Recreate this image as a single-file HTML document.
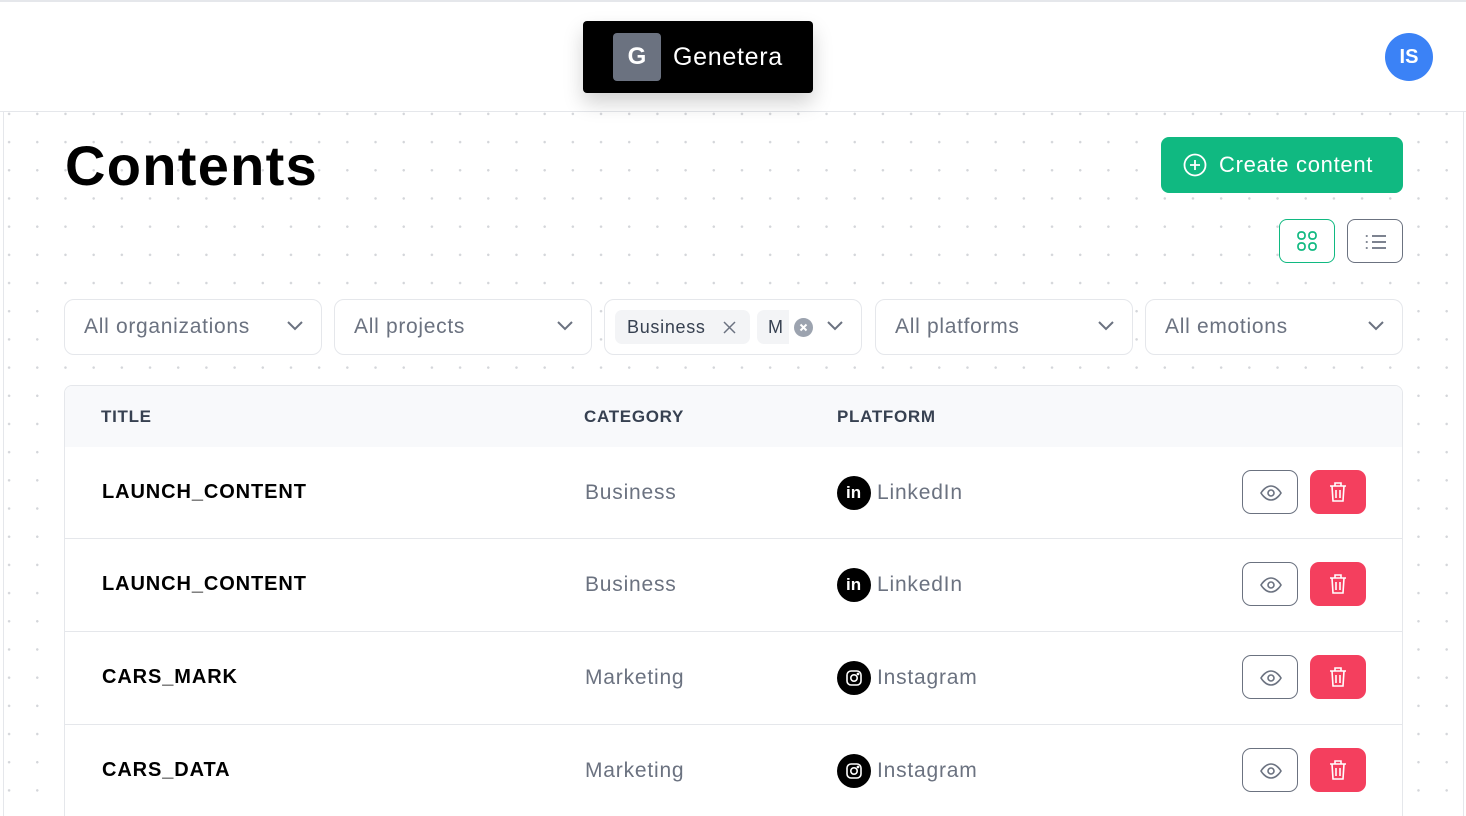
<!DOCTYPE html>
<html><head><meta charset="utf-8"><style>
*{box-sizing:border-box;margin:0;padding:0}
html,body{width:1466px;height:816px;overflow:hidden}
body{background:#fff;font-family:"Liberation Sans",sans-serif;position:relative;letter-spacing:.7px}
.top{position:absolute;left:0;top:0;width:1466px;height:112px;border-top:2px solid #e5e7eb;border-bottom:1px solid #e5e7eb;background:#fff}
.main{position:absolute;left:3px;top:112px;width:1461px;height:704px;border-left:1px solid #e5e7eb;border-right:1px solid #e5e7eb;
background-image:radial-gradient(circle,#d4d6da 1.1px,transparent 1.3px);background-size:28.2px 28.2px;background-position:-9px 16px}
.logo{position:absolute;left:583px;top:21px;width:230px;height:72px;background:#000;border-radius:4px;box-shadow:0 10px 20px rgba(0,0,0,.18);color:#fff}
.logo .g{position:absolute;left:30px;top:12px;width:48px;height:48px;background:#6b7280;border-radius:4px;font-weight:bold;font-size:24px;text-align:center;line-height:48px;letter-spacing:0}
.logo .t{position:absolute;left:90px;top:22px;font-size:25px}
.av{position:absolute;left:1385px;top:33px;width:48px;height:48px;border-radius:50%;background:#3b82f6;color:#fff;font-weight:bold;font-size:20px;text-align:center;line-height:48px;letter-spacing:0}
h1{position:absolute;left:65px;top:133px;font-size:56px;font-weight:bold;color:#000;letter-spacing:1.3px}
.create{position:absolute;left:1161px;top:137px;width:242px;height:56px;background:#10b981;border-radius:8px;color:#fff;font-size:22px;line-height:56px;padding-left:58px}
.create svg{position:absolute;left:22px;top:16px}
.vb{position:absolute;top:219px;width:56px;height:44px;border-radius:8px;background:#fff}
.sel{position:absolute;top:299px;width:258px;height:56px;border:1px solid #e5e7eb;border-radius:10px;background:#fff;font-size:21px;color:#6b7280;line-height:54px;padding-left:19px}
.sel .ch{position:absolute;right:17px;top:20px}
.tag{position:absolute;top:10px;height:34px;background:#f3f4f6;border-radius:7px;line-height:34px;font-size:18px;color:#374151}
.table{position:absolute;left:64px;top:385px;width:1339px;height:431px;border:1px solid #e5e7eb;border-bottom:none;border-radius:8px 8px 0 0;background:#fff;overflow:hidden}
.th{height:61px;background:#f8f9fb;position:relative;font-size:17px;font-weight:bold;color:#374151}
.th span,.row span{position:absolute}
.row{height:93px;border-top:1px solid #e5e7eb;position:relative}
.row .ti{left:37px;top:34px;font-size:20px;font-weight:bold;color:#000;letter-spacing:.9px}
.row .ca{left:520px;top:34px;font-size:21px;color:#6b7280;letter-spacing:.8px}
.row .pl{left:812px;top:34px;font-size:21px;color:#6b7280;letter-spacing:.8px}
.row .ic{position:absolute;left:772px;width:34px;height:34px;border-radius:50%;background:#000;top:29px}
.eye{position:absolute;left:1177px;top:23px;width:56px;height:44px;border:1px solid #6b7280;border-radius:9px}
.del{position:absolute;left:1245px;top:23px;width:56px;height:44px;background:#f43f5e;border-radius:9px}
.eye svg,.del svg{position:absolute;left:16px;top:10px}
</style></head><body>
<div class="top"></div>
<div class="main"></div>
<div class="logo"><div class="g">G</div><div class="t">Genetera</div></div>
<div class="av">IS</div>
<h1>Contents</h1>
<div class="create"><svg width="24" height="24" viewBox="0 0 24 24" fill="none" stroke="#fff" stroke-width="1.8"><circle cx="12" cy="12" r="10.5"/><path d="M12 7v10M7 12h10"/></svg>Create content</div>
<div class="vb" style="left:1279px;border:1px solid #10b981"><svg style="position:absolute;left:17px;top:11px" width="21" height="21" viewBox="0 0 21 21" fill="none" stroke="#10b981" stroke-width="1.7"><rect x="1" y="1" width="7" height="7" rx="3"/><rect x="12" y="1" width="7" height="7" rx="3"/><rect x="1" y="12" width="7" height="7" rx="3"/><rect x="12" y="12" width="7" height="7" rx="3"/></svg></div>
<div class="vb" style="left:1347px;border:1px solid #6b7280"><svg style="position:absolute;left:17px;top:13px" width="22" height="18" viewBox="0 0 22 18" fill="none" stroke="#6b7280" stroke-width="1.7"><path d="M7 3h14M7 9h14M7 15h14"/><path d="M1.5 3h.5M1.5 9h.5M1.5 15h.5" stroke-linecap="round"/></svg></div>

<div class="sel" style="left:64px">All organizations<svg class="ch" width="18" height="12" viewBox="0 0 18 12"><path d="M2 2l7 7 7-7" fill="none" stroke="#6b7280" stroke-width="2"/></svg></div>
<div class="sel" style="left:334px">All projects<svg class="ch" width="18" height="12" viewBox="0 0 18 12"><path d="M2 2l7 7 7-7" fill="none" stroke="#6b7280" stroke-width="2"/></svg></div>
<div class="sel" style="left:604px;padding-left:0">
 <div class="tag" style="left:10px;width:135px;padding-left:12px">Business<svg style="position:absolute;left:108px;top:11px" width="13" height="13" viewBox="0 0 13 13"><path d="M1 1l11 11M12 1L1 12" stroke="#6b7280" stroke-width="1.5"/></svg></div>
 <div class="tag" style="left:152px;width:32px;padding-left:11px;border-radius:7px 0 0 7px">M</div>
 <svg style="position:absolute;left:189px;top:18px" width="19" height="19" viewBox="0 0 19 19"><circle cx="9.5" cy="9.5" r="9.5" fill="#9ca3af"/><path d="M6.5 6.5l6 6M12.5 6.5l-6 6" stroke="#fff" stroke-width="2"/></svg>
 <svg class="ch" width="18" height="12" viewBox="0 0 18 12"><path d="M2 2l7 7 7-7" fill="none" stroke="#6b7280" stroke-width="2"/></svg></div>
<div class="sel" style="left:875px">All platforms<svg class="ch" width="18" height="12" viewBox="0 0 18 12"><path d="M2 2l7 7 7-7" fill="none" stroke="#6b7280" stroke-width="2"/></svg></div>
<div class="sel" style="left:1145px">All emotions<svg class="ch" width="18" height="12" viewBox="0 0 18 12"><path d="M2 2l7 7 7-7" fill="none" stroke="#6b7280" stroke-width="2"/></svg></div>

<div class="table">
 <div class="th"><span style="left:36px;top:21px">TITLE</span><span style="left:519px;top:21px">CATEGORY</span><span style="left:772px;top:21px">PLATFORM</span></div>
 <div class="row" style="border-top:none;height:91px"><span class="ti">LAUNCH_CONTENT</span><span class="ca">Business</span><div class="ic"><span style="color:#fff;font-weight:bold;font-size:17px;left:9px;top:7px;letter-spacing:0">in</span></div><span class="pl">LinkedIn</span>
  <div class="eye"><svg width="24" height="24" viewBox="0 0 24 24" fill="none" stroke="#6b7280" stroke-width="1.6"><path d="M2 12s4-7 10-7 10 7 10 7-4 7-10 7S2 12 2 12z"/><circle cx="12" cy="12" r="3"/></svg></div>
  <div class="del"><svg width="24" height="24" viewBox="0 0 24 24" fill="none" stroke="#fff" stroke-width="1.6"><path d="M4 6h16M9 6V3h6v3M6 6l1 15h10l1-15M10 10v8M14 10v8"/></svg></div></div>
 <div class="row"><span class="ti">LAUNCH_CONTENT</span><span class="ca">Business</span><div class="ic"><span style="color:#fff;font-weight:bold;font-size:17px;left:9px;top:7px;letter-spacing:0">in</span></div><span class="pl">LinkedIn</span>
  <div class="eye"><svg width="24" height="24" viewBox="0 0 24 24" fill="none" stroke="#6b7280" stroke-width="1.6"><path d="M2 12s4-7 10-7 10 7 10 7-4 7-10 7S2 12 2 12z"/><circle cx="12" cy="12" r="3"/></svg></div>
  <div class="del"><svg width="24" height="24" viewBox="0 0 24 24" fill="none" stroke="#fff" stroke-width="1.6"><path d="M4 6h16M9 6V3h6v3M6 6l1 15h10l1-15M10 10v8M14 10v8"/></svg></div></div>
 <div class="row"><span class="ti">CARS_MARK</span><span class="ca">Marketing</span><div class="ic"><svg style="position:absolute;left:9px;top:9px" width="16" height="16" viewBox="0 0 16 16" fill="none" stroke="#fff" stroke-width="1.6"><rect x="1" y="1" width="14" height="14" rx="4"/><circle cx="8" cy="8" r="3.2"/><circle cx="12" cy="4" r=".6" fill="#fff"/></svg></div><span class="pl">Instagram</span>
  <div class="eye"><svg width="24" height="24" viewBox="0 0 24 24" fill="none" stroke="#6b7280" stroke-width="1.6"><path d="M2 12s4-7 10-7 10 7 10 7-4 7-10 7S2 12 2 12z"/><circle cx="12" cy="12" r="3"/></svg></div>
  <div class="del"><svg width="24" height="24" viewBox="0 0 24 24" fill="none" stroke="#fff" stroke-width="1.6"><path d="M4 6h16M9 6V3h6v3M6 6l1 15h10l1-15M10 10v8M14 10v8"/></svg></div></div>
 <div class="row"><span class="ti">CARS_DATA</span><span class="ca">Marketing</span><div class="ic"><svg style="position:absolute;left:9px;top:9px" width="16" height="16" viewBox="0 0 16 16" fill="none" stroke="#fff" stroke-width="1.6"><rect x="1" y="1" width="14" height="14" rx="4"/><circle cx="8" cy="8" r="3.2"/><circle cx="12" cy="4" r=".6" fill="#fff"/></svg></div><span class="pl">Instagram</span>
  <div class="eye"><svg width="24" height="24" viewBox="0 0 24 24" fill="none" stroke="#6b7280" stroke-width="1.6"><path d="M2 12s4-7 10-7 10 7 10 7-4 7-10 7S2 12 2 12z"/><circle cx="12" cy="12" r="3"/></svg></div>
  <div class="del"><svg width="24" height="24" viewBox="0 0 24 24" fill="none" stroke="#fff" stroke-width="1.6"><path d="M4 6h16M9 6V3h6v3M6 6l1 15h10l1-15M10 10v8M14 10v8"/></svg></div></div>
</div>
</body></html>
